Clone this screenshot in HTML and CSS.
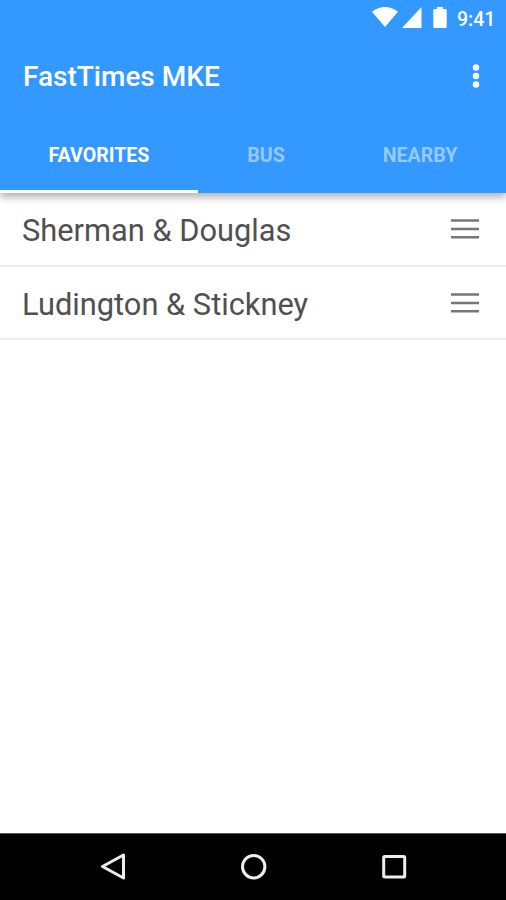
FILE: index.html
```html
<!DOCTYPE html>
<html lang="en">
<head>
  <meta charset="utf-8">
  <title>FastTimes MKE</title>
  <meta name="viewport" content="width=device-width, initial-scale=1.0">
  <link rel="stylesheet" href="styles.css">
</head>
<body>
  <header class="header">
    <div class="status-bar">
      <svg class="wifi" width="26" height="20" viewBox="0 0 26 20"><path d="M0 4.8C7.5-1.5 18.500-1.500 26 4.800L13 20z"/></svg>
      <svg class="signal" width="20" height="21" viewBox="0 0 20 21"><path d="M0 21L19.500 0V21z"/></svg>
      <svg class="battery" width="14" height="21" viewBox="0 0 14 21"><path d="M4 0h6v2h2.500q1.200 0 1.200 1.200v16.600q0 1.200-1.200 1.200h-11Q.3 21 .3 19.800v-16.600Q.3 2 1.500 2H4z"/></svg>
      <span class="clock">9:41</span>
    </div>
    <div class="toolbar">
      <h1>FastTimes MKE</h1>
      <button class="more" title="More options">
        <svg width="8" height="24" viewBox="0 0 8 24"><circle cx="4" cy="3.500" r="3.200"/><circle cx="4" cy="12" r="3.200"/><circle cx="4" cy="20.500" r="3.200"/></svg>
      </button>
    </div>
    <nav class="tabs">
      <a class="tab active">FAVORITES</a>
      <a class="tab">BUS</a>
      <a class="tab">NEARBY</a>
    </nav>
  </header>

  <ul class="stops">
    <li>
      <span>Sherman &amp; Douglas</span>
      <svg width="28" height="20" viewBox="0 0 28 20"><path d="M0 1.500h28M0 10h28M0 18.300h28"/></svg>
    </li>
    <li>
      <span>Ludington &amp; Stickney</span>
      <svg width="28" height="20" viewBox="0 0 28 20"><path d="M0 1.500h28M0 10h28M0 18.300h28"/></svg>
    </li>
  </ul>

  <footer class="nav-bar">
    <svg width="26" height="28" viewBox="0 0 26 28"><path d="M2.500 13.500L23.500 2v23z"/></svg>
    <svg width="26" height="28" viewBox="0 0 26 28"><circle cx="12.700" cy="13.700" r="11.200"/></svg>
    <svg width="26" height="28" viewBox="0 0 26 28"><rect x="2.700" y="3.500" width="21" height="20.500" rx="1"/></svg>
  </footer>
</body>
</html>
```

FILE: styles.css
```css
* {
  box-sizing: border-box;
}
body {
  margin: 0;
  height: 900px;
  display: flex;
  flex-direction: column;
  overflow: hidden;
  background-color: #fff;
  font-family: Roboto, "Liberation Sans", sans-serif;
}
.header {
  height: 193px;
  background-color: #3398ff;
  color: #fff;
  box-shadow: 0 4px 8px rgba(0, 0, 0, 0.32);
}
.header svg {
  fill: #fff;
}
.status-bar {
  height: 36px;
  padding: 7px 11px 0 0;
  display: flex;
  justify-content: flex-end;
  align-items: flex-start;
}
.signal {
  margin-left: 4px;
}
.battery {
  margin-left: 11px;
}
.clock {
  margin-left: 10px;
  width: 38px;
  font-size: 19.500px;
  line-height: 26px;
  font-weight: 500;
  white-space: nowrap;
}
.toolbar {
  height: 79px;
  padding: 0 26px 0 23px;
  display: flex;
  justify-content: space-between;
  align-items: center;
}
h1 {
  margin: 0;
  padding-top: 1px;
  font-size: 28px;
  font-weight: 500;
}
.more {
  display: flex;
  padding: 0;
  border: none;
  background: none;
}
.tabs {
  height: 78px;
  display: grid;
  grid-template-columns: 198px 136px 172px;
}
.tab {
  padding-top: 28px;
  text-align: center;
  font-size: 19.600px;
  line-height: 26px;
  font-weight: 700;
  color: #94caff;
}
.active {
  color: #fff;
  border-bottom: 3px solid #fff;
}
.stops {
  flex: 1;
  margin: 0;
  padding: 0;
  list-style: none;
}
.stops li {
  height: 73px;
  padding: 0 27px 0 22px;
  display: flex;
  justify-content: space-between;
  align-items: center;
  border-bottom: 2px solid #eee;
  font-size: 30.800px;
  color: #505050;
}
.stops li:first-child {
  height: 74px;
}
.stops span {
  padding-top: 3px;
}
.stops svg {
  stroke: #767676;
  stroke-width: 2.600;
}
.nav-bar {
  height: 67px;
  border-top: 1px solid #555;
  padding: 0 99px 0 100px;
  display: flex;
  justify-content: space-between;
  align-items: center;
  background-color: #000;
}
.nav-bar svg {
  fill: none;
  stroke: #eee;
  stroke-width: 3;
  stroke-linejoin: round;
}
```
